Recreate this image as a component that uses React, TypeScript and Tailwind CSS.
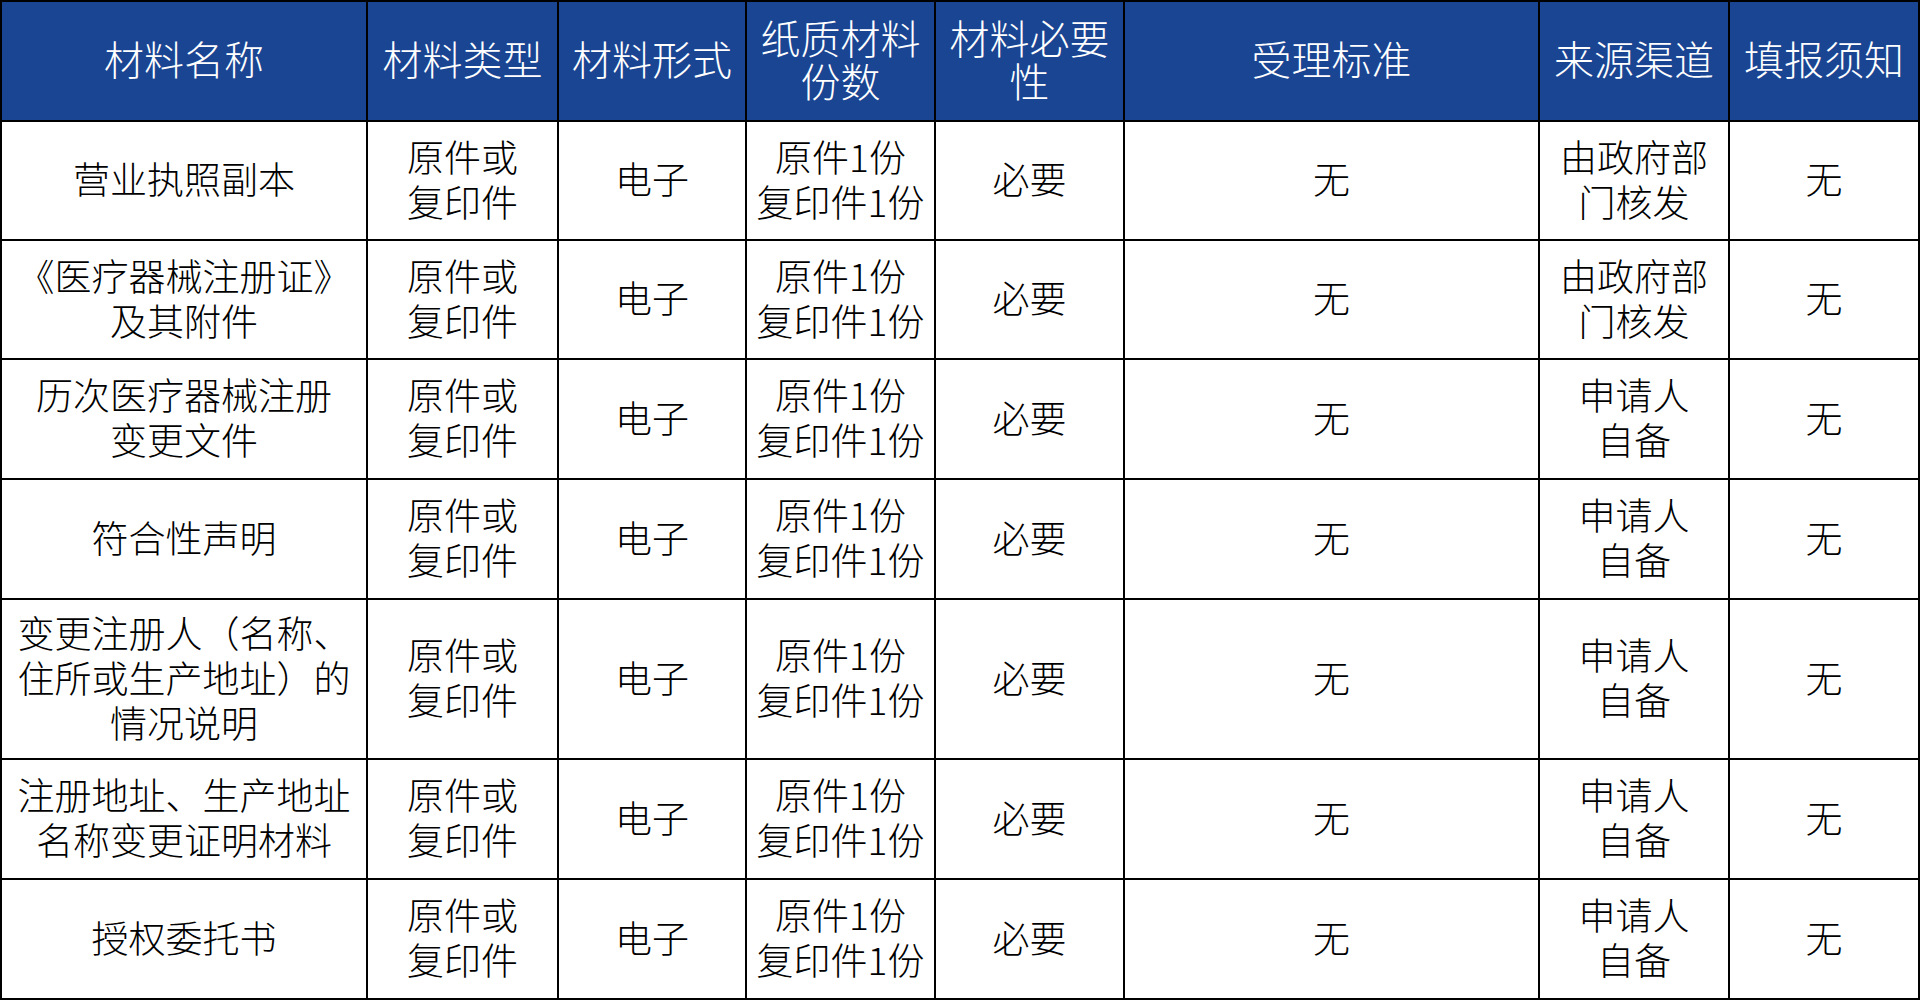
import React from "react";

const rows: { name: string[]; src: string[]; h: string }[] = [
  { name: ["营业执照副本"], src: ["由政府部", "门核发"], h: "h-[119px]" },
  { name: ["《医疗器械注册证》", "及其附件"], src: ["由政府部", "门核发"], h: "h-[119px]" },
  { name: ["历次医疗器械注册", "变更文件"], src: ["申请人", "自备"], h: "h-[120px]" },
  { name: ["符合性声明"], src: ["申请人", "自备"], h: "h-[120px]" },
  { name: ["变更注册人（名称、", "住所或生产地址）的", "情况说明"], src: ["申请人", "自备"], h: "h-[160px]" },
  { name: ["注册地址、生产地址", "名称变更证明材料"], src: ["申请人", "自备"], h: "h-[120px]" },
  { name: ["授权委托书"], src: ["申请人", "自备"], h: "h-[120px]" },
];

function Lines({ lines }: { lines: string[] }) {
  return (
    <span>
      {lines.map((l, i) => (
        <React.Fragment key={i}>
          {i > 0 && <br />}
          {l}
        </React.Fragment>
      ))}
    </span>
  );
}

const th = "border-2 border-black bg-[#1a4593] text-white text-[40px] leading-[43px] font-light text-center align-middle whitespace-nowrap px-0 pb-[5px]";
const td = "border-2 border-black text-black text-[37px] leading-[45px] font-light text-center align-middle whitespace-nowrap px-0 pb-[4px]";

export default function App() {
  return (
    <div
      className="w-[1920px] h-[1001px] bg-white overflow-hidden"
      style={{ fontFamily: '"Noto Sans CJK SC", "Noto Sans", sans-serif' }}
    >
      <table className="w-[1918px] table-fixed border-collapse border-2 border-black">
        <colgroup>
          <col className="w-[366px]" />
          <col className="w-[191px]" />
          <col className="w-[188px]" />
          <col className="w-[189px]" />
          <col className="w-[189px]" />
          <col className="w-[415px]" />
          <col className="w-[190px]" />
          <col className="w-[190px]" />
        </colgroup>
        <thead>
          <tr className="h-[120px]">
            <th className={th}>材料名称</th>
            <th className={th}>材料类型</th>
            <th className={th}>材料形式</th>
            <th className={th}>
              <Lines lines={["纸质材料", "份数"]} />
            </th>
            <th className={th}>
              <Lines lines={["材料必要", "性"]} />
            </th>
            <th className={th}>受理标准</th>
            <th className={th}>来源渠道</th>
            <th className={th}>填报须知</th>
          </tr>
        </thead>
        <tbody>
          {rows.map((r, i) => (
            <tr key={i} className={r.h}>
              <td className={td}>
                <Lines lines={r.name} />
              </td>
              <td className={td}>
                <Lines lines={["原件或", "复印件"]} />
              </td>
              <td className={td}>电子</td>
              <td className={td}>
                <Lines lines={["原件1份", "复印件1份"]} />
              </td>
              <td className={td}>必要</td>
              <td className={td}>无</td>
              <td className={td}>
                <Lines lines={r.src} />
              </td>
              <td className={td}>无</td>
            </tr>
          ))}
        </tbody>
      </table>
    </div>
  );
}
